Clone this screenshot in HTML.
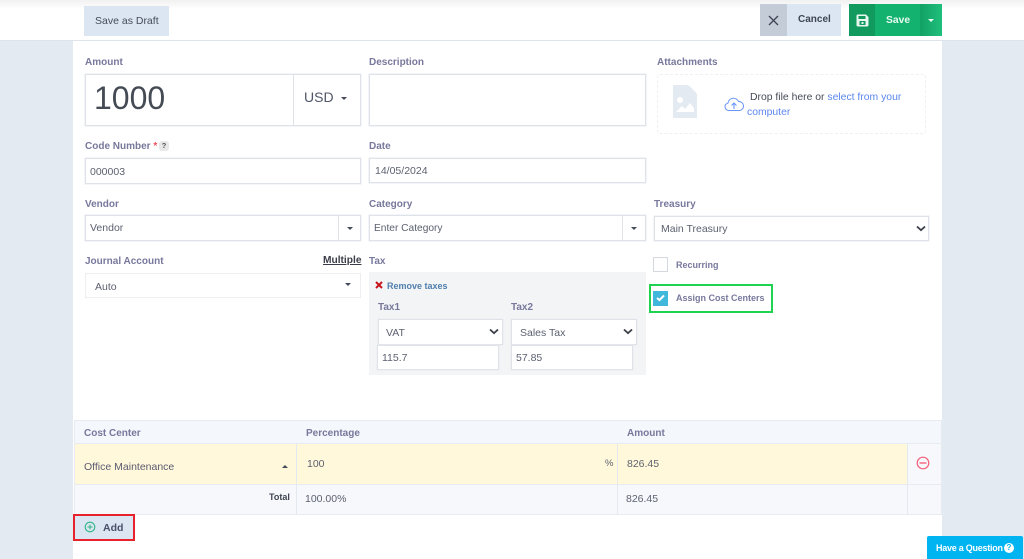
<!DOCTYPE html>
<html><head><meta charset="utf-8"><style>
*{box-sizing:border-box}
html,body{margin:0;padding:0;width:1024px;height:559px;overflow:hidden;background:#e4eaf2;font-family:"Liberation Sans",sans-serif;color:#4a4f5c}
#r{position:relative;width:1024px;height:559px;overflow:hidden;filter:blur(.3px)}
.a{position:absolute}
.t{position:absolute;white-space:nowrap;line-height:14px;font-size:10.5px}
.l{color:#77789c;font-weight:bold;font-size:10px;margin-top:2px}
.b{position:absolute;background:#fff;border:1px solid #dfe2e8;box-shadow:0 0 0 .5px #e8ebf0}
.c{position:absolute;width:0;height:0;border-left:3px solid transparent;border-right:3px solid transparent;border-top:3px solid #444a58}
.v{color:#5c6170;font-size:10.5px;margin-top:1px}
</style></head><body><div id="r">
<div class="a" style="left:0;top:0;width:1024px;height:40px;background:linear-gradient(#f1f1f1,#fff 9px)"></div>
<div class="a" style="left:0;top:40px;width:1024px;height:1px;background:#dfe4ec"></div>
<div class="a" style="left:73px;top:41px;width:869px;height:518px;background:#fff"></div>

<div class="a" style="left:84px;top:6px;width:85px;height:30px;background:#dce6f2"></div>
<span class="t" style="left:95px;top:14px;color:#464b5a;font-weight:500;font-size:10.500px">Save as Draft</span>

<div class="a" style="left:760px;top:4px;width:81px;height:32px;background:#dce6f2"></div>
<div class="a" style="left:760px;top:4px;width:27px;height:32px;background:#c3ccd7"></div>
<svg class="a" style="left:768px;top:15px" width="11" height="11" viewBox="0 0 11 11"><path d="M1 1L10 10M10 1L1 10" stroke="#3f4552" stroke-width="1.3" fill="none"/></svg>
<span class="t" style="left:798px;top:13px;color:#3f4552;font-weight:bold;font-size:10px">Cancel</span>

<div class="a" style="left:849px;top:4px;width:93px;height:32px;background:#14b26f"></div>
<div class="a" style="left:849px;top:4px;width:26px;height:32px;background:#12995e"></div>
<div class="a" style="left:920px;top:4px;width:22px;height:32px;background:linear-gradient(90deg,#12a164,#1fbf7c)"></div>
<svg class="a" style="left:856px;top:14px" width="13" height="13" viewBox="0 0 13 13"><path d="M1.500 .5H10L12.500 3V11a1.500 1.500 0 0 1-1.500 1.500H2A1.500 1.500 0 0 1 .5 11V2A1.500 1.500 0 0 1 1.500 .5Z" fill="#e8f7f0"/><rect x="2.500" y="2" width="7" height="3" fill="#12995e"/><rect x="3.500" y="7" width="6" height="4" fill="#12995e"/><rect x="5.500" y="8" width="2" height="2" fill="#e8f7f0"/></svg>
<span class="t" style="left:886px;top:14px;color:#e8fbf2;font-weight:bold;font-size:10.300px">Save</span>
<div class="c" style="left:928px;top:19px;border-top-color:#e8fbf2"></div>

<span class="t l" style="left:85px;top:54px">Amount</span>
<div class="b" style="left:85px;top:74px;width:276px;height:52px"></div>
<div class="a" style="left:293px;top:75px;width:1px;height:50px;background:#dfe2e8"></div>
<span class="t" style="left:94px;top:77px;font-size:32px;line-height:42px;color:#454b55">1000</span>
<span class="t" style="left:304px;top:89px;font-size:14px;line-height:16px;color:#515768">USD</span>
<div class="c" style="left:341px;top:97px"></div>

<span class="t l" style="left:369px;top:54px">Description</span>
<div class="b" style="left:369px;top:74px;width:277px;height:52px"></div>

<span class="t l" style="left:657px;top:54px">Attachments</span>
<div class="a" style="left:657px;top:74px;width:269px;height:60px;border:1px dashed #eef0f4;border-radius:3px"></div>
<svg class="a" style="left:672px;top:85px" width="26" height="33" viewBox="0 0 26 33"><path d="M1 0H16L25 9V33H1Z" fill="#e4eaf2"/><path d="M17.500 0L25 7.500H17.500Z" fill="#fff"/><path d="M17.500 1L24 7.500H17.500Z" fill="#e4eaf2"/><circle cx="8" cy="15" r="3" fill="#fff"/><path d="M4 27L10 21L13 24L18 18L22 23V27Z" fill="#fff"/></svg>
<svg class="a" style="left:724px;top:96px" width="20" height="16" viewBox="0 0 20 16"><path d="M5 14.500H4.500a3.800 3.800 0 0 1-.5-7.500a5.500 5.500 0 0 1 10.500-1.500a4.500 4.500 0 0 1 1 9H5Z" fill="none" stroke="#6a95f5" stroke-width="1"/><path d="M10 13V7.500M7.500 9.500L10 7L12.500 9.500" fill="none" stroke="#6a95f5" stroke-width="1.100"/></svg>
<span class="t" style="left:750px;top:90px;color:#454b55;font-size:10.400px;margin-top:1px">Drop file here or <span style="color:#5b87ee">select from your</span></span>
<span class="t" style="left:747px;top:105px;color:#5b87ee;font-size:10.400px;margin-top:1px">computer</span>

<span class="t l" style="left:85px;top:138px">Code Number <span style="color:#ef4d5a">*</span></span>
<div class="a" style="left:159px;top:141px;width:10px;height:10px;border-radius:3px;background:#e8e8e8;color:#555;font-size:7.500px;font-weight:bold;line-height:10px;text-align:center">?</div>
<div class="b" style="left:85px;top:158px;width:276px;height:26px"></div>
<span class="t v" style="left:90px;top:164px">000003</span>
<span class="t l" style="left:369px;top:138px">Date</span>
<div class="b" style="left:369px;top:158px;width:277px;height:25px"></div>
<span class="t v" style="left:375px;top:163px">14/05/2024</span>

<span class="t l" style="left:85px;top:196px">Vendor</span>
<div class="b" style="left:85px;top:215px;width:276px;height:26px"></div>
<div class="a" style="left:338px;top:216px;width:1px;height:24px;background:#dfe2e8"></div>
<span class="t v" style="left:90px;top:220px">Vendor</span>
<div class="c" style="left:347px;top:227px"></div>

<span class="t l" style="left:369px;top:196px">Category</span>
<div class="b" style="left:369px;top:215px;width:277px;height:26px"></div>
<div class="a" style="left:622px;top:216px;width:1px;height:24px;background:#dfe2e8"></div>
<span class="t v" style="left:374px;top:221px;font-size:10.200px">Enter Category</span>
<div class="c" style="left:631px;top:227px"></div>

<span class="t l" style="left:654px;top:196px">Treasury</span>
<div class="b" style="left:654px;top:216px;width:275px;height:25px"></div>
<span class="t v" style="left:661px;top:221px">Main Treasury</span>
<svg class="a" style="left:916px;top:225px" width="10" height="7" viewBox="0 0 10 7"><path d="M1 1.500L5 5.200L9 1.500" fill="none" stroke="#3c3f48" stroke-width="1.800"/></svg>

<span class="t l" style="left:85px;top:253px">Journal Account</span>
<span class="t" style="left:323px;top:254px;font-weight:bold;color:#3a3d48;text-decoration:underline;font-size:10.200px">Multiple</span>
<div class="b" style="left:85px;top:273px;width:276px;height:25px;border-color:#eceef2;box-shadow:none"></div>
<span class="t v" style="left:95px;top:279px">Auto</span>
<div class="c" style="left:345px;top:283px"></div>

<span class="t l" style="left:369px;top:253px">Tax</span>
<div class="a" style="left:369px;top:272px;width:277px;height:103px;background:#f3f4f5"></div>
<svg class="a" style="left:375px;top:281px" width="8" height="8" viewBox="0 0 8 8"><path d="M1 1L7 7M7 1L1 7" stroke="#c8141e" stroke-width="2"/></svg>
<span class="t" style="left:387px;top:279px;font-size:9px;font-weight:bold;color:#4f7fae">Remove taxes</span>
<span class="t l" style="left:378px;top:299px">Tax1</span>
<span class="t l" style="left:511px;top:299px">Tax2</span>
<div class="b" style="left:378px;top:319px;width:125px;height:26px"></div>
<span class="t v" style="left:386px;top:325px">VAT</span>
<svg class="a" style="left:489px;top:328px" width="10" height="7" viewBox="0 0 10 7"><path d="M1 1.500L5 5.200L9 1.500" fill="none" stroke="#3c3f48" stroke-width="1.800"/></svg>
<div class="b" style="left:511px;top:319px;width:126px;height:26px"></div>
<span class="t v" style="left:520px;top:325px">Sales Tax</span>
<svg class="a" style="left:623px;top:328px" width="10" height="7" viewBox="0 0 10 7"><path d="M1 1.500L5 5.200L9 1.500" fill="none" stroke="#3c3f48" stroke-width="1.800"/></svg>
<div class="b" style="left:377px;top:345px;width:122px;height:25px"></div>
<span class="t v" style="left:382px;top:350px">115.7</span>
<div class="b" style="left:511px;top:345px;width:122px;height:25px"></div>
<span class="t v" style="left:516px;top:350px">57.85</span>

<div class="a" style="left:653px;top:257px;width:15px;height:15px;background:#fff;border:1px solid #d5d8de"></div>
<span class="t l" style="left:676px;top:256px;font-size:9px">Recurring</span>
<div class="a" style="left:649px;top:284px;width:124px;height:29px;border:2px solid #1fd24f"></div>
<div class="a" style="left:653px;top:291px;width:15px;height:15px;background:#3fb8dc"></div>
<svg class="a" style="left:656px;top:294px" width="9" height="8" viewBox="0 0 9 8"><path d="M1 4L3.500 6L8 1.500" fill="none" stroke="#fff" stroke-width="2"/></svg>
<span class="t l" style="left:676px;top:289px;font-size:9px">Assign Cost Centers</span>

<div class="a" style="left:74px;top:420px;width:868px;height:24px;background:#f4f7fb;border:1px solid #e8ecf2"></div>
<div class="a" style="left:74px;top:444px;width:833px;height:40px;background:#fff8da"></div>
<div class="a" style="left:907px;top:444px;width:35px;height:40px;background:#f7f8fb"></div>
<div class="a" style="left:74px;top:484px;width:868px;height:31px;background:#f7f8fb;border:1px solid #e8ecf2"></div>
<div class="a" style="left:74px;top:444px;width:1px;height:40px;background:#e8ecf2"></div>
<div class="a" style="left:941px;top:444px;width:1px;height:40px;background:#e8ecf2"></div>
<div class="a" style="left:296px;top:444px;width:1px;height:70px;background:#e4e9f0"></div>
<div class="a" style="left:617px;top:444px;width:1px;height:70px;background:#e4e9f0"></div>
<div class="a" style="left:907px;top:444px;width:1px;height:70px;background:#e4e9f0"></div>
<span class="t l" style="left:84px;top:425px">Cost Center</span>
<span class="t l" style="left:306px;top:425px">Percentage</span>
<span class="t l" style="left:627px;top:425px">Amount</span>
<span class="t v" style="left:84px;top:459px;color:#5a5a72">Office Maintenance</span>
<div class="c" style="left:282px;top:465px;border-top:0;border-bottom:3px solid #444a58"></div>
<span class="t v" style="left:307px;top:456px">100</span>
<span class="t v" style="left:605px;top:456px;font-size:9.500px">%</span>
<span class="t v" style="left:627px;top:456px">826.45</span>
<svg class="a" style="left:916px;top:456px" width="14" height="14" viewBox="0 0 14 14"><circle cx="7" cy="7" r="5.800" fill="none" stroke="#f2607a" stroke-width="1.200"/><path d="M3.500 7H10.500" stroke="#f2607a" stroke-width="1.400"/></svg>
<span class="t" style="left:269px;top:490px;font-size:9px;font-weight:bold;color:#3f4552">Total</span>
<span class="t v" style="left:305px;top:491px">100.00%</span>
<span class="t v" style="left:626px;top:491px">826.45</span>

<div class="a" style="left:73px;top:514px;width:62px;height:27px;background:#dce6f2;border:2px solid #e8212f"></div>
<svg class="a" style="left:84px;top:521px" width="12" height="12" viewBox="0 0 12 12"><circle cx="6" cy="6" r="4.800" fill="none" stroke="#2fb585" stroke-width="1.100"/><path d="M3.500 6H8.500M6 3.500V8.500" stroke="#2fb585" stroke-width="1"/></svg>
<span class="t" style="left:103px;top:521px;font-weight:bold;color:#4a4f6a;font-size:10.500px">Add</span>

<div class="a" style="left:927px;top:536px;width:96px;height:23px;background:#00b4f1;border-radius:2px 2px 0 0"></div>
<span class="t" style="left:936px;top:541px;color:#fff;font-weight:bold;font-size:9px;letter-spacing:-.25px">Have a Question</span>
<div class="a" style="left:1004px;top:543px;width:10px;height:10px;border-radius:50%;background:#fff;color:#00b4f1;font-size:8px;font-weight:bold;line-height:10px;text-align:center">?</div>
</div></body></html>
